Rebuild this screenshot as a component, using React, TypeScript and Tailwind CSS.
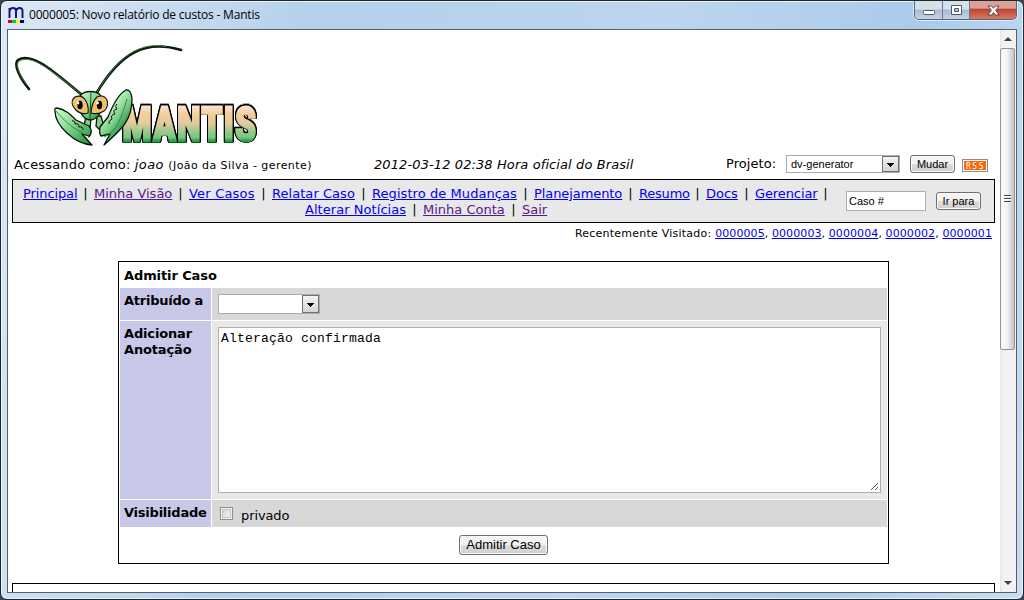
import type { ReactNode } from "react";

function Link({ children, visited = false }: { children: ReactNode; visited?: boolean }) {
  return <a className={visited ? "text-[#551a8b] underline underline-offset-1" : "text-[#0000ee] underline underline-offset-1"}>{children}</a>;
}

function NavRow({ items, trailing = false }: { items: { label: string; visited?: boolean; width: string }[]; trailing?: boolean }) {
  return (
    <div className="flex h-4 whitespace-nowrap">
      {items.map((item, i) => (
        <div key={item.label} className="flex">
          <div className={item.width}>
            <Link visited={item.visited}>{item.label}</Link>
          </div>
          {(trailing || i < items.length - 1) && <span className="w-[17px] text-center">|</span>}
        </div>
      ))}
    </div>
  );
}

function Arrow({ className }: { className: string }) {
  return (
    <div className={`flex w-[17px] shrink-0 items-center justify-center border border-[#707070] bg-linear-to-b from-[#f4f4f4] to-[#d4d4d4] pt-0.5 ${className}`}>
      <svg width="7" height="4" shapeRendering="crispEdges"><path d="M0 0H7L3.5 4Z" fill="#000" /></svg>
    </div>
  );
}

function Button({ children, className }: { children: ReactNode; className: string }) {
  return (
    <button className={`flex items-center justify-center whitespace-nowrap rounded-[3px] border border-[#707070] bg-linear-to-b from-[#f3f3f3] from-50% via-[#dddddd] via-50% to-[#cfcfcf] font-['Liberation_Sans',sans-serif] shadow-[inset_0_0_0_1px_#fafafa] ${className}`}>
      {children}
    </button>
  );
}

function MantisLogo() {
  return (
    <svg width="252" height="108" viewBox="13 42 252 108" className="block overflow-visible">
      <defs>
        <linearGradient id="word" x1="0" y1="-26" x2="0" y2="0" gradientUnits="userSpaceOnUse">
          <stop offset="0" stopColor="#fae8d6" />
          <stop offset="0.25" stopColor="#f3cc9a" />
          <stop offset="0.5" stopColor="#e3cb9c" />
          <stop offset="0.75" stopColor="#94c98c" />
          <stop offset="0.9" stopColor="#7cc480" />
          <stop offset="1" stopColor="#23a044" />
        </linearGradient>
        <linearGradient id="leg" x1="0" y1="0" x2="1" y2="1">
          <stop offset="0" stopColor="#d5ffd0" />
          <stop offset="0.45" stopColor="#85d78f" />
          <stop offset="1" stopColor="#168936" />
        </linearGradient>
        <linearGradient id="claw" x1="0.3" y1="0.2" x2="0.75" y2="0.8">
          <stop offset="0" stopColor="#d5ffce" />
          <stop offset="0.5" stopColor="#7fd08c" />
          <stop offset="1" stopColor="#0b7f2c" />
        </linearGradient>
      </defs>
      <g fill="none" strokeLinecap="round">
        <path d="M29 89C20 78 13 64 18 60C31 52 50 68 82 95" stroke="#0c170d" strokeWidth="2.6" />
        <path d="M27 85C20 76 15 65 19 61C32 54 51 70 82 95" stroke="#438547" strokeWidth="1" />
        <path d="M96 94C120 53 145 39 181 50" stroke="#0c170d" strokeWidth="2.6" />
        <path d="M96 94C119 54 141 42 166 46.5" stroke="#397c3e" strokeWidth="1" />
      </g>
      <g transform="translate(122.5 141) scale(1 1.37)" className="[filter:drop-shadow(1px_0_0_#000)_drop-shadow(-1px_0_0_#000)_drop-shadow(0_0.8px_0_#000)_drop-shadow(0_-0.8px_0_#000)]">
        <text textLength="135" lengthAdjust="spacingAndGlyphs" fill="url(#word)" stroke="url(#word)" strokeWidth="2.1" className="font-['Roboto',sans-serif] text-[35px] font-black tracking-[1.6px]">MANTIS</text>
      </g>
      <g stroke="#06150a" strokeWidth="1.3" strokeLinejoin="round">
        <path d="M86 116L84 126L91 131L89 137L91 119Z" fill="#86cc85" />
        <path d="M97 116L96 126L100 130L103 123L101 116Z" fill="#86cc85" />
        <path d="M57 108C65 109 71 115 76 120L89 126C92 129 92 134 89 136L82 134L92 145C75 144 55 126 55 111Q54 108 57 108Z" fill="url(#leg)" />
        <path d="M104 145L110 134L101 136Q99 134 100 127L108 117C114 102 120 93 126 90Q131 89 132 99C132 123 118 132 104 145Z" fill="url(#claw)" />
        <path d="M56 111C64 120 70 127 83 133M104 137C117 132 122 116 127 99" fill="none" stroke="#2c8040" strokeWidth="0.9" />
        <path d="M72 121Q75 120 75 124Q79 123 79 127Q83 126 83 130M117 104Q114 106 117 109Q112 110 115 114Q110 115 112 119Q108 121 109 124" fill="none" strokeWidth="1" />
        <path d="M80 96C84 90 97 90 101 96C105 105 100 120 90 120C81 119 76 105 80 96Z" fill="url(#leg)" />
        <path d="M91 92L90 119" strokeWidth="0.7" />
        <path d="M75 97Q82 94 86 101Q89 107 88 113Q81 115 76 110Q70 104 73 99Z" fill="#f4c06e" strokeWidth="1.1" />
        <path d="M97 97Q104 94 107 100Q109 107 104 111Q98 115 91 113Q92 101 97 97Z" fill="#f4c06e" strokeWidth="1.1" />
      </g>
      <ellipse cx="80" cy="105" rx="2.7" ry="4.2" />
      <ellipse cx="99.5" cy="105" rx="2.7" ry="4.2" />
      <circle cx="78" cy="103" r="1.4" fill="#fff" />
      <circle cx="97.5" cy="103" r="1.4" fill="#fff" />
    </svg>
  );
}

function TitleBar() {
  return (
    <header className="flex h-[28px] shrink-0 items-start justify-between pl-[6px] pr-[6px]">
      <div className="flex pt-[5px]">
        <svg width="18" height="18" viewBox="0 0 18 18">
          <path d="M2.5 12V2M2.5 5Q3 2 6 2Q9 2 9 5V12M9 5Q10 2 12.5 2Q15.5 2 15.5 5V12" fill="none" stroke="#141494" strokeWidth="2" />
          <path d="M1 14H5V17H1Z" fill="#d40032" /><path d="M5 14H9V17H5Z" fill="#08ca24" /><path d="M9 14H13V17H9Z" fill="#fff22a" /><path d="M13 14H17V17H13Z" fill="#00008c" />
        </svg>
        <h1 className="ml-1 mt-px whitespace-nowrap font-['Open_Sans',sans-serif] text-[12px] leading-4 tracking-[-0.2px]">0000005: Novo relatório de custos - Mantis</h1>
      </div>
      <div className="flex h-[19px] w-[103px] overflow-hidden rounded-b-[5px] border border-t-0 border-[#53677f] shadow-[0_0_0_1px_#d9ebfb]">
        <div className="flex w-[28px] items-center justify-center border-r border-[#687b91] bg-linear-to-b from-[#d6e0eb] from-45% via-[#a9b9cd] via-50% to-[#c5d5e6]">
          <svg width="14" height="14"><rect x="1.5" y="7.5" width="11" height="4" rx="1" fill="#fff" stroke="#4f5b70" /></svg>
        </div>
        <div className="flex w-[27px] items-center justify-center border-r border-[#687b91] bg-linear-to-b from-[#d6e0eb] from-45% via-[#a9b9cd] via-50% to-[#c5d5e6]">
          <svg width="13" height="12"><path fillRule="evenodd" d="M1.5 1.5H11.5V10.5H1.5ZM4.5 4.5V7.5H8.5V4.5Z" fill="#fff" stroke="#4f5b70" /></svg>
        </div>
        <div className="flex flex-1 items-center justify-center bg-linear-to-b from-[#dda096] from-40% via-[#bd4130] via-45% to-[#d97863]">
          <svg width="13" height="11"><path d="M1 1H4.5L6.5 3.3L8.5 1H12L8.7 5.3L12 10H8.5L6.5 7.5L4.5 10H1L4.3 5.3Z" fill="#fff" stroke="#5a4b58" /></svg>
        </div>
      </div>
    </header>
  );
}

function Scrollbar() {
  return (
    <aside className="flex w-4 shrink-0 flex-col items-start bg-linear-to-r from-[#e7e7e7] to-[#f2f2f2] to-20%">
      <div className="ml-1 flex h-[18px] items-center"><svg width="8" height="4"><path d="M0 4L4 0L8 4Z" fill="#404040" /></svg></div>
      <div className="flex h-[302px] w-[15px] flex-col items-center justify-center gap-px rounded-[2px] border border-[#929292] bg-linear-to-r from-[#f7f7f7] from-40% to-[#c5c5ca]">
        <div className="h-0.5 w-[7px] border-t border-[#444] bg-white" /><div className="h-0.5 w-[7px] border-t border-[#444] bg-white" /><div className="h-0.5 w-[7px] border-t border-[#444] bg-white" />
      </div>
      <div className="mt-auto mb-[7px] ml-1"><svg width="8" height="4"><path d="M0 0H8L4 4Z" fill="#404040" /></svg></div>
    </aside>
  );
}

const firstRow = [
  { label: "Principal", width: "w-[54px] tracking-[-0.1px]" },
  { label: "Minha Visão", width: "w-[78px]", visited: true },
  { label: "Ver Casos", width: "w-[66px] tracking-[0.2px]" },
  { label: "Relatar Caso", width: "w-[83px] tracking-[0.05px]" },
  { label: "Registro de Mudanças", width: "w-[145px] tracking-[0.07px]" },
  { label: "Planejamento", width: "w-[88px] tracking-[-0.08px]" },
  { label: "Resumo", width: "w-[50px] tracking-[-0.2px]" },
  { label: "Docs", width: "w-[32px]" },
  { label: "Gerenciar", width: "w-[62px] tracking-[-0.1px]" },
];
const secondRow = [
  { label: "Alterar Notícias", width: "w-[101px] tracking-[0.05px]" },
  { label: "Minha Conta", width: "w-[82px]", visited: true },
  { label: "Sair", width: "w-[26px]", visited: true },
];

export default function App() {
  return (
    <div className="h-[600px] w-[1024px] overflow-hidden bg-[#41464d]">
      <div className="flex h-[600px] w-[1024px] flex-col overflow-hidden rounded-[7px] border border-[#20262e] bg-[linear-gradient(100deg,#dce8f5_0%,#c8dcf0_15%,#b5d0eb_28%,#bdd5ee_60%,#abcbe9_82%,#cbdef1_100%)] font-[Verdana,'DejaVu_Sans',sans-serif] text-[13px] leading-4 text-black shadow-[inset_0_0_0_1px_#e8f4ff]">
        <TitleBar />
        <main className="ml-1.5 mr-1.5 flex h-[564px] shrink-0 overflow-hidden border border-[#53616f] bg-white">
          <div className="flex min-w-0 flex-1 flex-col overflow-hidden">
            <div className="ml-[5px] h-[121px] shrink-0 pt-3"><MantisLogo /></div>

            <div className="flex h-[26px] shrink-0 items-center whitespace-nowrap pl-1.5">
              <div className="w-[360px] pt-0.5 tracking-[0.17px]">Acessando como: <i className="tracking-[0.4px]">joao</i> <span className="text-[11px] tracking-[0.43px]">(João da Silva - gerente)</span></div>
              <div className="w-[352px] pt-0.5 italic tracking-[0.1px]">2012-03-12 02:38 Hora oficial do Brasil</div>
              <div className="w-[60px] pb-px tracking-[0.05px]">Projeto:</div>
              <div className="flex h-[18px] w-[114px] items-center justify-between border border-[#abadb3] pl-1 font-['Liberation_Sans',sans-serif] text-[11px]">dv-generator<Arrow className="h-4" /></div>
              <Button className="ml-[10px] h-[18px] w-[45px] text-[11px]">Mudar</Button>
              <div className="ml-[7px] mt-[3px] flex h-[13px] w-[26px] items-center justify-center border border-[#8c8c8c] bg-[#ff6600] pt-px pl-px font-['DejaVu_Sans_Mono',monospace] text-[8px] leading-[11px] tracking-[1.5px] text-white shadow-[inset_0_0_0_1px_#fff]">RSS</div>
            </div>

            <nav className="ml-1 mt-0.5 flex h-11 w-[983px] shrink-0 border border-black bg-[#e8e8e8]">
              <div className="ml-[10px] flex w-[823px] flex-col items-start pt-[6px]">
                <NavRow items={firstRow} trailing />
                <div className="pl-[282px]"><NavRow items={secondRow} /></div>
              </div>
              <div className="mt-[11px] h-5 w-20 border border-[#abadb3] bg-white pl-0.5 font-['Liberation_Sans',sans-serif] text-[11px] leading-[18px]">Caso #</div>
              <Button className="ml-[10px] mt-3 h-[18px] w-[45px] text-[11px]">Ir para</Button>
            </nav>

            <div className="mr-2 h-[38px] shrink-0 pt-[3px] text-right text-[11px] tracking-[0.09px] whitespace-nowrap">
              <span className="tracking-[0.23px]">Recentemente Visitado: </span><Link>0000005</Link>, <Link>0000003</Link>, <Link>0000004</Link>, <Link>0000002</Link>, <Link>0000001</Link>
            </div>

            <section className="ml-[110px] flex h-[303px] w-[771px] shrink-0 flex-col border border-black px-px">
              <h2 className="h-[26px] shrink-0 pl-1 pt-[6px] font-bold tracking-[-0.1px]">Admitir Caso</h2>
              <div className="grid shrink-0 grid-cols-[91px_675px] grid-rows-[32px_178px_27px] gap-px whitespace-nowrap">
                <div className="bg-[#c8c8e8] pl-1 pt-[5px] font-bold tracking-[-0.25px]">Atribuído a</div>
                <div className="bg-[#d8d8d8] pl-1.5 pt-1.5">
                  <div className="flex h-5 w-[102px] items-center justify-end border border-[#abadb3] bg-white"><Arrow className="h-[18px]" /></div>
                </div>
                <div className="bg-[#c8c8e8] pl-1 pt-[5px] font-bold tracking-[-0.15px]">Adicionar<br />Anotação</div>
                <div className="bg-[#e8e8e8] pl-1.5 pt-1.5">
                  <div className="flex h-[166px] w-[663px] items-start justify-between border border-[#abadb3] bg-white pl-0.5 pt-[3px] font-['Liberation_Mono',monospace] text-[13px] leading-4 tracking-[0.2px]">
                    <span>Alteração confirmada</span>
                    <svg width="10" height="10" className="self-end"><path d="M1 8L8 1M5 8L8 5" stroke="#555" fill="none" /></svg>
                  </div>
                </div>
                <div className="bg-[#c8c8e8] pl-1 pt-[5px] font-bold tracking-[-0.23px]">Visibilidade</div>
                <div className="flex bg-[#d8d8d8] pl-2">
                  <div className="mt-[7px] h-[13px] w-[13px] border border-[#8e8f8f] bg-linear-to-br from-[#c7cace] to-white shadow-[inset_0_0_0_1px_#f4f4f4,inset_0_0_0_2px_#bfc3c8]" />
                  <span className="ml-2 pt-2 tracking-[-0.1px]">privado</span>
                </div>
              </div>
              <Button className="ml-[339px] mt-2 h-5 w-[89px] text-[13px]">Admitir Caso</Button>
            </section>
            <div className="ml-1 mt-[19px] h-5 w-[983px] shrink-0 border border-black" />
          </div>
          <Scrollbar />
        </main>
      </div>
    </div>
  );
}
